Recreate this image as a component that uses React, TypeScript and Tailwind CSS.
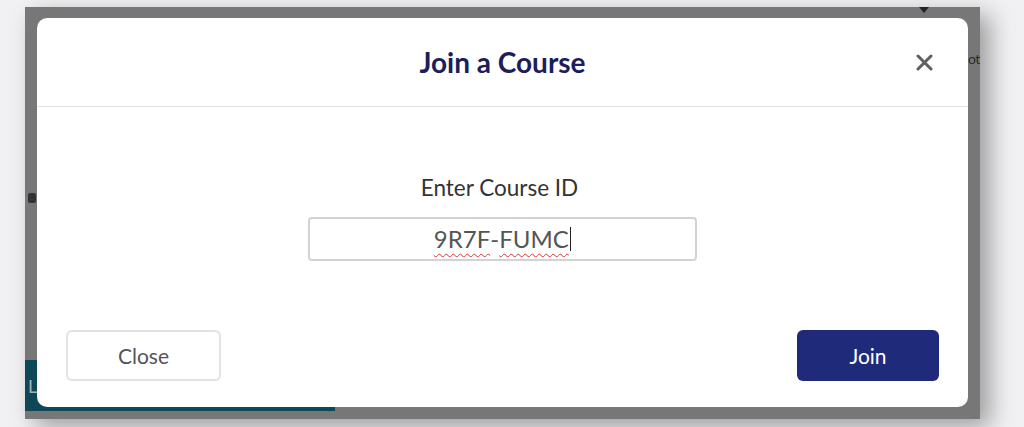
import React from "react";

export default function App() {
  const font = { fontFamily: "Lato, 'Open Sans', sans-serif" };
  return (
    <div className="w-[1024px] h-[427px] bg-[#f1f1f3] overflow-hidden pt-[7px] pl-[25px]" style={font}>
      <div className="relative w-[955px] h-[412px] bg-[#777777] shadow-[10px_8px_22px_rgba(0,0,0,0.35)] pt-[11px] pl-[12px]">
        {/* background content peeking out */}
        <div className="absolute left-0 top-[353px] w-[310px] h-[51px] bg-[#0e4756]" />
        <div className="absolute left-[3px] top-[370px] text-[18px] text-[#9fb4ba] leading-none">L</div>
        <div className="absolute left-[3px] top-[186px] w-[8px] h-[10px] rounded-[2px] bg-[#333]" />
        <div className="absolute left-[943px] top-[45px] text-[14px] text-[#2a2a2a] leading-none tracking-[-0.5px]">ot</div>
        <div className="absolute left-[894px] top-0 w-0 h-0 border-l-[5px] border-r-[5px] border-t-[6px] border-l-transparent border-r-transparent border-t-[#222]" />

        <div className="relative w-[931px] h-[389px] bg-white rounded-[10px] flex flex-col">
          <div className="h-[89px] border-b border-[#e3e3e3] flex items-center justify-center relative">
            <div className="text-[28px] font-bold text-[#1c1d5a] leading-none">Join a Course</div>
            <button className="absolute right-[34px] top-[34px] w-[20px] h-[20px] flex items-center justify-center">
              <svg width="17" height="17" viewBox="0 0 17 17">
                <path d="M2 2 L15 15 M15 2 L2 15" stroke="#5f5f5f" strokeWidth="3" strokeLinecap="round" />
              </svg>
            </button>
          </div>
          <div className="flex flex-col items-center pt-[70px]">
            <div className="text-[22.5px] text-[#333] leading-none -ml-[6px]">Enter Course ID</div>
            <div className="mt-[17px] w-[389px] h-[44px] border-2 border-[#d2d2d2] rounded-[4px] flex items-center justify-center">
              <span className="text-[24px] text-[#555] leading-none flex items-center">
                <span className="underline decoration-wavy decoration-[#d33] decoration-1 underline-offset-[5px]">9R7F</span>
                <span>-</span>
                <span className="underline decoration-wavy decoration-[#d33] decoration-1 underline-offset-[5px]">FUMC</span>
                <span className="inline-block w-[1.5px] h-[24px] bg-[#222] ml-[1px]" />
              </span>
            </div>
          </div>
          <div className="mt-auto mb-[26px] flex items-center justify-between px-[29px]">
            <button className="w-[155px] h-[51px] bg-white border-2 border-[#e2e2e2] rounded-[6px] text-[21px] text-[#555]">Close</button>
            <button className="w-[142px] h-[51px] bg-[#1f2a7a] rounded-[6px] text-[21px] text-white">Join</button>
          </div>
        </div>
      </div>
    </div>
  );
}
